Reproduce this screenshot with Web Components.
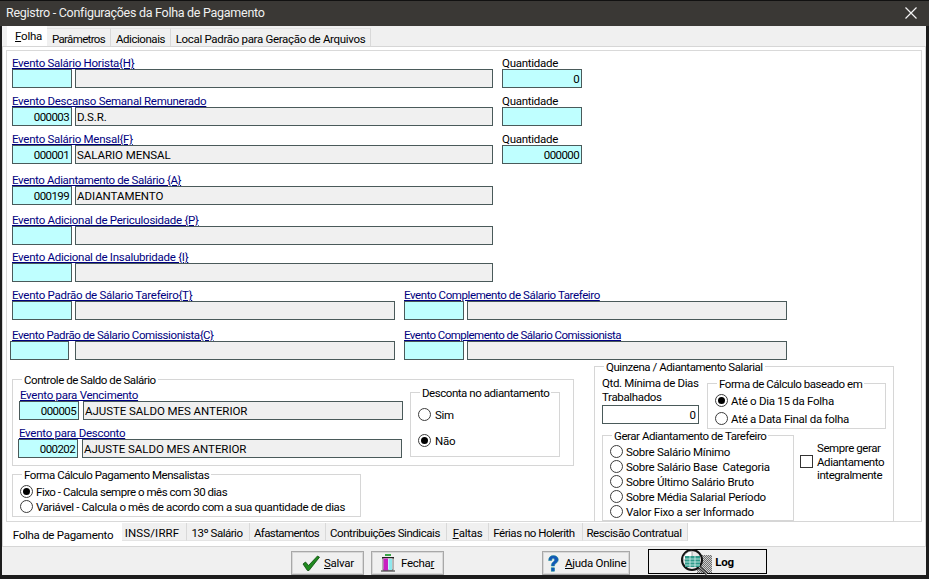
<!DOCTYPE html>
<html lang="pt"><head><meta charset="utf-8"><title>Registro</title>
<style>
html,body{margin:0;padding:0;background:#1c1c1c;overflow:hidden}
body{font:11.5px/14px Roboto,"Liberation Sans",Arial,sans-serif;letter-spacing:-.27px;color:#000;width:929px;height:579px}
</style></head><body>
<x-window>
  <x-titlebar>Registro - Configurações da Folha de Pagamento</x-titlebar>
  <x-tabbar pos="top" style="height:20px">
    <x-tab active w="40" style="padding-left:3px"><u>F</u>olha</x-tab><x-tab w="64" style="letter-spacing:-.65px">Parâmetros</x-tab><x-tab w="60" style="letter-spacing:-.45px">Adicionais</x-tab><x-tab w="200" style="letter-spacing:-.32px">Local Padrão para Geração de Arquivos</x-tab>
  </x-tabbar>
  <x-panel>
    <x-page>
      <x-row style="margin-top:4px">
        <x-field label="Evento Salário Horista{H}" dw="418"></x-field>
        <x-qty value="0"></x-qty>
      </x-row>
      <x-row style="margin-top:5px">
        <x-field label="Evento Descanso Semanal Remunerado" code="000003" desc="D.S.R." dw="418"></x-field>
        <x-qty></x-qty>
      </x-row>
      <x-row style="margin-top:5px">
        <x-field label="Evento Salário Mensal{F}" code="000001" desc="SALARIO MENSAL" dw="418"></x-field>
        <x-qty value="000000"></x-qty>
      </x-row>
      <x-row style="margin-top:8px">
        <x-field label="Evento Adiantamento de Salário {A}" code="000199" desc="ADIANTAMENTO" dw="418" ls="-.36"></x-field>
      </x-row>
      <x-row style="margin-top:7px">
        <x-field label="Evento Adicional de Periculosidade {P}" dw="418"></x-field>
      </x-row>
      <x-row style="margin-top:4px">
        <x-field label="Evento Adicional de Insalubridade {I}" dw="418"></x-field>
      </x-row>
      <x-row style="margin-top:5px">
        <x-field label="Evento Padrão de Sálario Tarefeiro{T}" dw="320"></x-field>
        <x-field label="Evento Complemento de Sálario Tarefeiro" dw="320" ls="-.4"></x-field>
      </x-row>
      <x-row style="margin-top:7px">
        <x-field label="Evento Padrão de Sálario Comissionista{C}" dw="320" shift="1" ls="-.42"></x-field>
        <x-field label="Evento Complemento de Sálario Comissionista" dw="320" ls="-.52"></x-field>
      </x-row>
      <x-lower>
        <x-stack style="margin-top:19px">
          <x-group legend="Controle de Saldo de Salário" style="width:560px;height:85px">
            <x-hbox>
              <x-stack style="padding:7px 0 0 6px">
                <x-field label="Evento para Vencimento" code="000005" desc="AJUSTE SALDO MES ANTERIOR" dw="320" gap="4" indent="1"></x-field>
                <x-field label="Evento para Desconto" code="000202" desc="AJUSTE SALDO MES ANTERIOR" dw="320" gap="4" indent="1" style="margin:5px 0 0 -1px"></x-field>
              </x-stack>
              <x-group legend="Desconta no adiantamento" style="width:148px;height:63px;margin:12px 0 0 7px;">
                <x-stack style="padding:14px 0 0 7px;gap:11px">
                  <x-radio style="--g:4px">Sim</x-radio>
                  <x-radio checked style="--g:4px">Não</x-radio>
                </x-stack>
              </x-group>
            </x-hbox>
          </x-group>
          <x-group legend="Forma Cálculo Pagamento Mensalistas" style="width:347px;height:41px;margin-top:8px">
            <x-stack style="padding:9px 0 0 7px">
              <x-radio checked style="letter-spacing:-.47px">Fixo - Calcula sempre o mês com 30 dias</x-radio>
              <x-radio style="letter-spacing:-.36px">Variável - Calcula o mês de acordo com a sua quantidade de dias</x-radio>
            </x-stack>
          </x-group>
        </x-stack>
        <x-group legend="Quinzena / Adiantamento Salarial" style="width:298px;height:154px;margin:6px 0 0 20px">
          <x-stack style="padding:10px 0 0 7px">
            <x-hbox>
              <x-qtd></x-qtd>
              <x-group legend="Forma de Cálculo baseado em" style="width:177px;height:44px;margin:6px 0 0 8px">
                <x-stack style="padding:9px 0 0 7px;gap:3px">
                  <x-radio checked>Até o Dia 15 da Folha</x-radio>
                  <x-radio>Até a Data Final da folha</x-radio>
                </x-stack>
              </x-group>
            </x-hbox>
            <x-hbox style="margin-top:6px">
              <x-group legend="Gerar Adiantamento de Tarefeiro" style="width:190px;height:84px">
                <x-stack style="padding:8px 0 0 7px">
                  <x-radio>Sobre Salário Mínimo</x-radio>
                  <x-radio>Sobre Salário Base&nbsp; Categoria</x-radio>
                  <x-radio>Sobre Último Salário Bruto</x-radio>
                  <x-radio>Sobre Média Salarial Período</x-radio>
                  <x-radio>Valor Fixo a ser Informado</x-radio>
                </x-stack>
              </x-group>
              <x-check style="margin:7px 0 0 6px">Sempre gerar<br>Adiantamento<br>integralmente</x-check>
            </x-hbox>
          </x-stack>
        </x-group>
      </x-lower>
    </x-page>
    <x-tabbar pos="bottom" style="height:24px">
      <x-tab active bottom w="113" style="padding-right:5px">Folha de Pagamento</x-tab><x-tab bottom w="65" style="letter-spacing:.15px;padding-right:4px">INSS/IRRF</x-tab><x-tab bottom w="63" style="letter-spacing:-.5px;padding-right:2px">13º Salário</x-tab><x-tab bottom w="76" style="letter-spacing:-.6px;padding-right:2px">Afastamentos</x-tab><x-tab bottom w="121" style="letter-spacing:-.45px;padding-right:2px">Contribuições Sindicais</x-tab><x-tab bottom w="42"><u>F</u>altas</x-tab><x-tab bottom w="94" style="letter-spacing:-.5px;padding-right:3px">Férias no Holerith</x-tab><x-tab bottom w="105" style="letter-spacing:-.4px;padding-right:2px">Rescisão Contratual</x-tab>
    </x-tabbar>
  </x-panel>
  <x-footer>
    <x-btn w="73" pad="10" gap="4" icon="check"><u>S</u>alvar</x-btn>
    <x-btn w="73" pad="9" gap="6" icon="door" style="margin-left:7px">Fecha<u>r</u></x-btn>
    <x-btn w="88" pad="4" gap="6" icon="help" style="margin-left:98px"><u>A</u>juda Online</x-btn>
    <x-log style="margin-left:18px">Log</x-log>
  </x-footer>
</x-window>
<script>
function def(name, css, html){
  customElements.define(name, class extends HTMLElement{
    connectedCallback(){
      if(this.shadowRoot) return;
      const r=this.attachShadow({mode:'open'});
      const h=typeof html==='function'?html(this):html;
      r.innerHTML='<style>'+css+'</style>'+h;
    }
  });
}
const a=(e,n,d='')=>e.hasAttribute(n)?e.getAttribute(n):d;

def('x-window',`:host{display:flex;flex-direction:column;box-sizing:border-box;width:929px;height:579px;padding:0 3px 4px 2px;background:#1c1c1c;border-top:1px solid #111}`,`<slot></slot>`);

def('x-titlebar',`:host{display:flex;align-items:center;justify-content:space-between;height:26px;margin:0 -3px 0 -2px;padding:0 12px 1px 6px;box-sizing:border-box;background:#3a3835;color:#f0f0f0;font-size:12.5px;letter-spacing:-.28px}
svg{display:block}`,`<slot></slot><svg width="12" height="12" viewBox="0 0 12 12"><path d="M.5.5l11 11M11.5.5l-11 11" stroke="#f4f4f4" stroke-width="1.2" fill="none"/></svg>`);

def('x-tabbar',`:host{display:flex;align-items:flex-start;flex:none;background:#f0f0f0;box-sizing:border-box;padding-left:5px}
:host([pos=top]){align-items:flex-end}
:host([pos=bottom]){background:#fff;padding-left:3px;padding-top:1px}`,`<slot></slot>`);

def('x-tab',`:host{display:flex;align-items:center;justify-content:center;box-sizing:border-box;height:18px;background:#f0f0f0;border-right:1px solid #d9d9d9;border-top:1px solid #e4e4e4;white-space:nowrap;padding-top:2px}
:host([active]){background:#fff;height:20px;border:0;padding-top:0;padding-bottom:1px}
:host([bottom]){border-top:0;border-bottom:1px solid #e4e4e4;height:18px;padding-top:2px}
:host([bottom][active]){height:23px;border:0;padding-top:3px;padding-bottom:0;margin-top:-1px}`,
 e=>{e.style.width=a(e,'w')+'px';return '<slot></slot>'});

def('x-panel',`:host{display:block;flex:none;height:501px;box-sizing:border-box;background:#fff;border:1px solid #d6d6d6;padding:3px 3px 0 3px}`,`<slot></slot>`);
def('x-page',`:host{display:block;box-sizing:border-box;height:472px;border:1px solid #d9d9d9;padding-left:5px;margin-right:0}`,`<slot></slot>`);

def('x-row',`:host{display:flex;gap:9px}`,`<slot></slot>`);
def('x-stack',`:host{display:flex;flex-direction:column;align-items:flex-start}`,`<slot></slot>`);
def('x-hbox',`:host{display:flex;align-items:flex-start}`,`<slot></slot>`);
def('x-lower',`:host{display:flex;align-items:flex-start}`,`<slot></slot>`);

def('x-box',`:host{display:block;box-sizing:border-box;height:19px;border:1px solid #4a5a5a;background:#f0f0f0;line-height:18px;padding:0 1px;white-space:nowrap;overflow:hidden;letter-spacing:-.05px}
:host([kind=c]){background:#bfffff;text-align:right;padding:0 2px;letter-spacing:-.6px}
:host([kind=w]){background:#fff;text-align:right;padding:0 2px}`,`<slot></slot>`);

def('x-field',`:host{display:block}
a{display:block;height:14px;line-height:17px;color:#000080;text-decoration:underline;white-space:nowrap}
.i{padding-left:1px}
.b{display:flex}`,
 e=>{const gap=a(e,'gap','3'),sh=+a(e,'shift','0');
  const cw=60-sh,ls=a(e,'ls');
  return `<a class="${a(e,'indent')?'i':''}" style="${ls?'letter-spacing:'+ls+'px':''}">${a(e,'label')}</a><div class="b" style="${sh?'margin-left:-2px':''}"><x-box kind="c" style="width:${cw}px">${a(e,'code')}</x-box><x-box style="width:${a(e,'dw')}px;margin-left:${+gap+(sh?3:0)}px">${a(e,'desc')}</x-box></div>`});

def('x-qty',`:host{display:block}
div{height:14px;line-height:17px}`,e=>`<div>Quantidade</div><x-box kind="c" style="width:80px">${a(e,'value')}</x-box>`);

def('x-qtd',`:host{display:block;width:97px;flex:none}
div{line-height:13.5px;height:28px;white-space:nowrap;letter-spacing:-.35px}`,`<div>Qtd. Mínima de Dias<br>Trabalhados</div><x-box kind="w" style="width:97px">0</x-box>`);

def('x-group',`:host{display:block;position:relative;flex:none;border:1px solid #d6d6d6;background:#fff}
.l{position:absolute;left:9px;top:-7px;background:#fff;padding:0 2px;line-height:14px;white-space:nowrap;letter-spacing:-.45px}`,
 e=>`<div class="l">${a(e,'legend')}</div><slot></slot>`);

def('x-radio',`:host{display:flex;align-items:center;height:15px;white-space:nowrap}
i{box-sizing:border-box;display:flex;align-items:center;justify-content:center;width:13px;height:13px;border:1px solid #3c3c3c;border-radius:50%;background:#fff;margin-right:var(--g,3px);flex:none}
b{display:block;width:7px;height:7px;border-radius:50%;background:#000}
span{padding-top:1px}`,
 e=>`<i>${e.hasAttribute('checked')?'<b></b>':''}</i><span><slot></slot></span>`);

def('x-check',`:host{display:flex;align-items:center;line-height:13.5px;white-space:nowrap;letter-spacing:-.42px}
i{display:block;box-sizing:border-box;width:13px;height:13px;border:1px solid #333;background:#fff;margin:0 4px 1px 0;flex:none}`,
 `<i></i><span><slot></slot></span>`);

def('x-footer',`:host{display:flex;align-items:flex-start;flex:1;background:#f0f0f0;padding:2px 0 0 289px;box-sizing:border-box}`,`<slot></slot>`);

const icons={
 check:`<svg width="18" height="16" viewBox="0 0 18 16"><path d="M1 9l2.500-2 3 3.500L15.500 1l2 1.200L7 15.500H5.400z" fill="#1f8a1f" stroke="#0c4a0c" stroke-width=".8"/></svg>`,
 door:`<svg width="14" height="18" viewBox="0 0 14 18"><rect x="4" y="0" width="6" height="2" fill="#3aa648"/><rect x="1" y="3" width="12" height="1.500" fill="#222"/><rect x="2" y="4" width="10" height="12" fill="#fff" stroke="#222" stroke-width=".6"/><rect x="2.500" y="4.500" width="4.500" height="12" fill="#c81fc0"/><rect x="7.500" y="5" width="3.500" height="11" fill="#8fe8ee"/><path d="M0 17h14" stroke="#222"/></svg>`,
 help:`<svg width="12" height="17" viewBox="0 0 12 17"><path d="M1.600 5.500C1.600 2.500 3.500.6 6.300.6c3 0 5 1.700 5 4 0 2-1.200 3-2.500 3.900-1 .7-1.300 1.300-1.300 2.500H4.300c0-2 .5-3 1.700-4 .9-.7 1.500-1.300 1.500-2.100 0-.8-.5-1.300-1.300-1.300-.9 0-1.400.6-1.500 1.900z" fill="#1458b8" stroke="#0c8c8c" stroke-width=".5"/><rect x="4.200" y="12.800" width="3.400" height="3.400" fill="#1458b8" stroke="#0c8c8c" stroke-width=".5"/></svg>`
};
def('x-btn',`:host{display:flex;align-items:center;box-sizing:border-box;height:24px;margin-top:2px;background:#f0f0f0;border:1px solid #a8a8a8;box-shadow:inset 0 0 0 1px #d8d8d8;white-space:nowrap}
svg{display:block;flex:none}`,
 e=>{e.style.width=a(e,'w')+'px';e.style.paddingLeft=a(e,'pad')+'px';
  return icons[a(e,'icon')].replace('<svg ','<svg style="margin-right:'+a(e,'gap')+'px" ')+'<slot></slot>'});

def('x-log',`:host{display:flex;align-items:center;justify-content:center;position:relative;box-sizing:border-box;width:119px;height:25px;background:#f0f0f0;border:1px solid #000;font-weight:bold;padding-left:34px}
svg{position:absolute;left:31px;top:-1px}`,
 `<svg width="34" height="26" viewBox="0 0 34 26"><defs><pattern id="d" width="2" height="2" patternUnits="userSpaceOnUse"><rect width="2" height="2" fill="#d0d0d0"/><rect width="1" height="1" fill="#707070"/><rect x="1" y="1" width="1" height="1" fill="#707070"/></pattern></defs><rect x="17" y="6" width="15" height="18" fill="url(#d)"/><circle cx="12" cy="11" r="10" fill="#e8e8e8" stroke="#111" stroke-width="2"/><path d="M12 11V2A9 9 0 0 0 3 11z" fill="#fff" stroke="#777" stroke-width=".6"/><rect x="5" y="7" width="15" height="11" fill="#2f9a8a"/><path d="M5 10h15M5 13h15M5 16h15M10 7v11M15 7v11" stroke="#d8f4f0" stroke-width=".8"/><path d="M19 18l8 7" stroke="#333" stroke-width="3"/><path d="M19 18l8 7" stroke="#bbb" stroke-width="1"/></svg><slot></slot>`);
</script>
</body></html>
